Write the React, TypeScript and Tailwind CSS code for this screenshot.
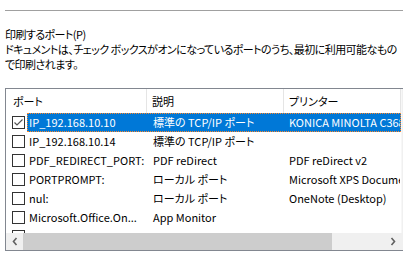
import React from "react";

type Row = { port: string; desc: string; printer: string; checked?: boolean; selected?: boolean };

const rows: Row[] = [
  { port: "IP_192.168.10.10", desc: "標準の TCP/IP ポート", printer: "KONICA MINOLTA C368SeriesPCL", checked: true, selected: true },
  { port: "IP_192.168.10.14", desc: "標準の TCP/IP ポート", printer: "" },
  { port: "PDF_REDIRECT_PORT:", desc: "PDF reDirect", printer: "PDF reDirect v2" },
  { port: "PORTPROMPT:", desc: "ローカル ポート", printer: "Microsoft XPS Document Writer" },
  { port: "nul:", desc: "ローカル ポート", printer: "OneNote (Desktop)" },
  { port: "Microsoft.Office.On...", desc: "App Monitor", printer: "" },
  { port: "", desc: "", printer: "" },
];

function CheckBox({ checked }: { checked?: boolean }) {
  return (
    <div className="w-[13px] h-[13px] border border-[#333333] bg-white shrink-0 flex items-center justify-center">
      {checked && (
        <svg width="11" height="11" viewBox="0 0 11 11">
          <polyline points="1.5,5.5 4,8 9.5,2.5" fill="none" stroke="#555555" strokeWidth="1.2" />
        </svg>
      )}
    </div>
  );
}

function ListRow({ r }: { r: Row }) {
  const sel = !!r.selected;
  return (
    <div className="flex h-[19px] shrink-0">
      <div className="w-[21px] shrink-0 flex items-center pl-[6px]">
        <CheckBox checked={r.checked} />
      </div>
      <div
        className={
          sel
            ? "flex flex-1 min-w-0 border border-dotted border-[#ff8728] bg-[#0078d7] text-white"
            : "flex flex-1 min-w-0 border border-transparent text-black"
        }
      >
        <div className="w-[119px] shrink-0 pl-[1px] whitespace-nowrap overflow-hidden flex items-center">{r.port}</div>
        <div className="w-[137px] shrink-0 pl-[6px] whitespace-nowrap overflow-hidden flex items-center">{r.desc}</div>
        <div className="flex-1 min-w-0 pl-[5px] whitespace-nowrap overflow-hidden flex items-center">{r.printer}</div>
      </div>
    </div>
  );
}

export default function App() {
  return (
    <div
      className="w-[403px] h-[257px] overflow-hidden bg-white text-black text-[11px] [font-feature-settings:'palt']"
      style={{ fontFamily: "'Noto Sans CJK JP', sans-serif" }}
    >
      <div className="pt-[10px] pl-[5px]">
        <div className="h-px w-[398px] bg-[#a0a0a0]" />
      </div>
      <div className="mt-[16px] pl-[5px] leading-[15px] whitespace-nowrap tracking-[-0.55px]">
        <div>印刷するポート(P)</div>
        <div>ドキュメントは、チェック ボックスがオンになっているポートのうち、最初に利用可能なもの</div>
        <div>で印刷されます。</div>
      </div>
      <div className="mt-[16px] ml-[5px] w-[414px] h-[163px] border border-[#828790] flex flex-col">
        <div className="flex h-[144px]">
          <div className="w-[395px] h-[144px] overflow-hidden flex flex-col">
            <div className="flex h-[24px] shrink-0">
              <div className="w-[141px] shrink-0 pl-[7px] border-r border-[#e5e5e5] flex items-center">ポート</div>
              <div className="w-[137px] shrink-0 pl-[5px] border-r border-[#e5e5e5] flex items-center">説明</div>
              <div className="flex-1 pl-[5px] flex items-center border-r border-[#e5e5e5]">プリンター</div>
            </div>
            {rows.map((r, i) => (
              <ListRow key={i} r={r} />
            ))}
          </div>
          <div className="w-[17px] bg-[#f0f0f0] border-l border-[#f7f7f7]" />
        </div>
        <div className="flex h-[17px]">
          <div className="w-[395px] flex bg-[#f0f0f0]">
            <div className="w-[17px] flex items-center justify-center">
              <svg width="6" height="9" viewBox="0 0 6 9">
                <polyline points="4.5,1 1.5,4.5 4.5,8" fill="none" stroke="#606060" strokeWidth="1.6" />
              </svg>
            </div>
            <div className="w-[309px] bg-[#cdcdcd]" />
            <div className="flex-1" />
            <div className="w-[17px] flex items-center justify-center">
              <svg width="6" height="9" viewBox="0 0 6 9">
                <polyline points="1.5,1 4.5,4.5 1.5,8" fill="none" stroke="#606060" strokeWidth="1.6" />
              </svg>
            </div>
          </div>
          <div className="w-[17px] bg-[#f0f0f0]" />
        </div>
      </div>
    </div>
  );
}
